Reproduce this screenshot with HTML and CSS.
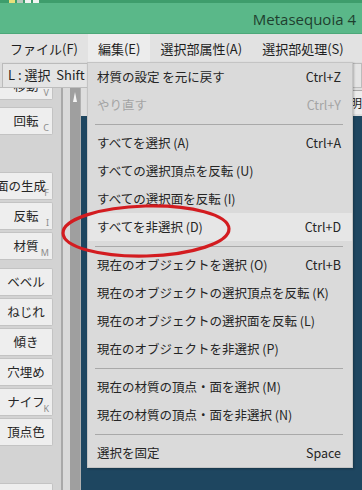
FILE: index.html
```
<!DOCTYPE html>
<html lang="ja">
<head>
<meta charset="utf-8">
<link rel="stylesheet" href="styles.css">
</head>
<body>
<div class="app">
  <header class="titlebar">
    <div class="topstrip"><i class="ic-y"></i><i class="ic-g"></i><i class="ic-w"></i><i class="ic-w"></i></div>
    <div class="title">Metasequoia 4</div>
  </header>
  <nav class="menubar">
    <span class="mi">ファイル(F)</span>
    <span class="mi active">編集(E)</span>
    <span class="mi">選択部属性(A)</span>
    <span class="mi">選択部処理(S)</span>
    <span class="mi">オブジェクト(O)</span>
  </nav>
  <div class="toolbar1"><span class="tbox">L : 選択&nbsp; Shift</span></div>
  <div class="main">
    <aside class="leftpanel">
      <div class="btnlist">
        <div class="group g1">
          <div class="btn">移動<span class="key">V</span></div>
          <div class="btn">回転<span class="key">C</span></div>
        </div>
        <div class="group g2">
          <div class="btn left">面の生成<span class="key">F</span></div>
          <div class="btn">反転<span class="key">I</span></div>
          <div class="btn">材質<span class="key">M</span></div>
        </div>
        <div class="group g3">
          <div class="btn">ベベル</div>
          <div class="btn">ねじれ</div>
          <div class="btn">傾き</div>
          <div class="btn">穴埋め</div>
          <div class="btn">ナイフ<span class="key">K</span></div>
          <div class="btn">頂点色</div>
        </div>
        <div class="group g4">
          <div class="btn">押し出し</div>
        </div>
      </div>
    </aside>
    <div class="vline"></div>
    <div class="vgap"></div>
    <div class="scroll"><span class="arrow"></span></div>
    <div class="viewcol">
      <div class="toolbar2"><span class="field">明るさ</span></div>
      <div class="viewport"></div>
    </div>
  </div>

  <div class="dropdown">
    <div class="item"><span>材質の設定 を元に戻す</span><span>Ctrl+Z</span></div>
    <div class="item disabled"><span>やり直す</span><span>Ctrl+Y</span></div>
    <div class="sep"></div>
    <div class="item"><span>すべてを選択 (A)</span><span>Ctrl+A</span></div>
    <div class="item"><span>すべての選択頂点を反転 (U)</span><span></span></div>
    <div class="item"><span>すべての選択面を反転 (I)</span><span></span></div>
    <div class="item hover"><span>すべてを非選択 (D)</span><span>Ctrl+D</span></div>
    <div class="sep"></div>
    <div class="item"><span>現在のオブジェクトを選択 (O)</span><span>Ctrl+B</span></div>
    <div class="item"><span>現在のオブジェクトの選択頂点を反転 (K)</span><span></span></div>
    <div class="item"><span>現在のオブジェクトの選択面を反転 (L)</span><span></span></div>
    <div class="item"><span>現在のオブジェクトを非選択 (P)</span><span></span></div>
    <div class="sep"></div>
    <div class="item"><span>現在の材質の頂点・面を選択 (M)</span><span></span></div>
    <div class="item"><span>現在の材質の頂点・面を非選択 (N)</span><span></span></div>
    <div class="sep"></div>
    <div class="item"><span>選択を固定</span><span>Space</span></div>
  </div>

  <svg class="annot" width="176" height="60" viewBox="0 0 176 60">
    <ellipse cx="87" cy="29" rx="83" ry="25" fill="none" stroke="#d31c20" stroke-width="3.2" transform="rotate(-1.5 87 29)"/>
  </svg>
</div>
</body>
</html>
```

FILE: styles.css
```
* { box-sizing: border-box; margin: 0; padding: 0; }
html, body { width: 362px; height: 490px; overflow: hidden; }
body {
  font-family: "Noto Sans CJK JP", "Noto Sans", sans-serif;
  background: #d4d4d4;
  color: #222;
}
.app {
  position: relative;
  width: 362px;
  height: 490px;
  display: flex;
  flex-direction: column;
  overflow: hidden;
}

/* title bar */
.titlebar {
  height: 34px;
  flex: none;
  background: #5ab889;
  border-bottom: 1px solid #4ca879;
  display: flex;
  flex-direction: column;
}
.topstrip {
  height: 3px;
  background: #3e9d6c;
  display: flex;
  gap: 2px;
  padding-left: 9px;
}
.topstrip i { display: block; width: 6px; height: 3px; }
.topstrip .ic-y { background: #e8e07a; }
.topstrip .ic-g { background: #b8c8bc; }
.topstrip .ic-w { background: #f2f4f2; }
.title {
  flex: 1;
  display: flex;
  align-items: center;
  justify-content: flex-end;
  padding-right: 6px;
  font-family: "Open Sans", "Noto Sans", sans-serif;
  font-size: 15px;
  color: #1f3f2f;
  padding-top: 1px;
}

/* menu bar */
.menubar {
  height: 28px;
  flex: none;
  background: #e2e2e2;
  display: flex;
  font-size: 13px;
  line-height: 1;
  white-space: nowrap;
  color: #1e1e1e;
}
.menubar .mi {
  padding: 0 10px;
  display: flex;
  align-items: center;
}
.menubar .mi.active { background: #ececec; }

/* toolbar rows */
.toolbar1 {
  height: 26px;
  flex: none;
  background: #dcdcdc;
  border-bottom: 1px solid #bdbdbd;
  padding: 1px 0 0 2px;
  white-space: nowrap;
  overflow: hidden;
}
.toolbar1 .tbox {
  display: block;
  height: 24px;
  padding-left: 5px;
  background: #e4e4e4;
  border: 1px solid #bbbbbb;
  border-bottom: none;
  font-size: 13px;
  line-height: 22px;
}

.main {
  flex: 1;
  display: flex;
  min-height: 0;
}
.leftpanel {
  width: 61px;
  flex: none;
  overflow: hidden;
  background: #d3d3d3;
}
.btnlist {
  display: flex;
  flex-direction: column;
  margin-top: -16px;
}
.group { display: flex; flex-direction: column; gap: 2px; }
.g1 { gap: 7px; }
.g2 { margin-top: 37px; }
.g3 { margin-top: 8px; }
.g4 { margin-top: 37px; }
.btn {
  position: relative;
  width: 53px;
  height: 28px;
  background: #eeeeee;
  border: 1px solid #c3c3c3;
  border-left: none;
  border-radius: 0 2px 2px 0;
  font-size: 12.5px;
  line-height: 26px;
  text-align: center;
  color: #262626;
  white-space: nowrap;
  overflow: hidden;
}
.btn.left { text-align: left; text-indent: -4px; }
.btn .key {
  position: absolute;
  right: 3px;
  bottom: 2px;
  font-family: "Noto Sans", sans-serif;
  font-size: 9px;
  line-height: 1;
  color: #8c8c8c;
  text-indent: 0;
}
.vline { width: 2px; flex: none; background: #a9a9a9; }
.vgap { width: 7px; flex: none; background: #dadada; }
.scroll {
  width: 11px;
  flex: none;
  background: #9f9f9f;
  display: flex;
  justify-content: center;
  padding-top: 4px;
  border-right: 1px solid #b0b0b0;
}
.arrow {
  width: 0;
  height: 0;
  border-left: 2.5px solid transparent;
  border-right: 2.5px solid transparent;
  border-bottom: 10px solid #f4f4f4;
}
.viewcol {
  flex: 1;
  display: flex;
  flex-direction: column;
  min-width: 0;
}
.toolbar2 {
  height: 28px;
  flex: none;
  background: #dedede;
  display: flex;
  justify-content: flex-end;
  padding-top: 2px;
  overflow: hidden;
}
.toolbar2 .field {
  width: 12px;
  height: 24px;
  background: #ececec;
  border-top: 1px solid #a8a8a8;
  font-size: 12px;
  line-height: 23px;
  white-space: nowrap;
  overflow: hidden;
}
.viewport { flex: 1; background: #1e4660; }

/* dropdown menu */
.dropdown {
  position: absolute;
  left: 87px;
  top: 62px;
  width: 266px;
  background: #dadada;
  border: 1px solid #c4c4c4;
  padding: 0;
  font-size: 12.5px;
  color: #252525;
  white-space: nowrap;
  box-shadow: 1px 1px 2px rgba(0,0,0,0.25);
}
.item {
  height: 28px;
  display: flex;
  align-items: center;
  justify-content: space-between;
  padding: 0 11px 0 9px;
  line-height: 1;
}
.item.disabled { color: #a4a4a4; }
.item.hover { background: #e6e6e6; }
.sep {
  height: 10px;
  display: flex;
  align-items: center;
  padding: 0 9px 0 7px;
}
.sep::before {
  content: "";
  display: block;
  flex: 1;
  height: 1px;
  background: #a9a9a9;
}

/* annotation */
.annot {
  position: absolute;
  left: 59px;
  top: 202px;
}
```
